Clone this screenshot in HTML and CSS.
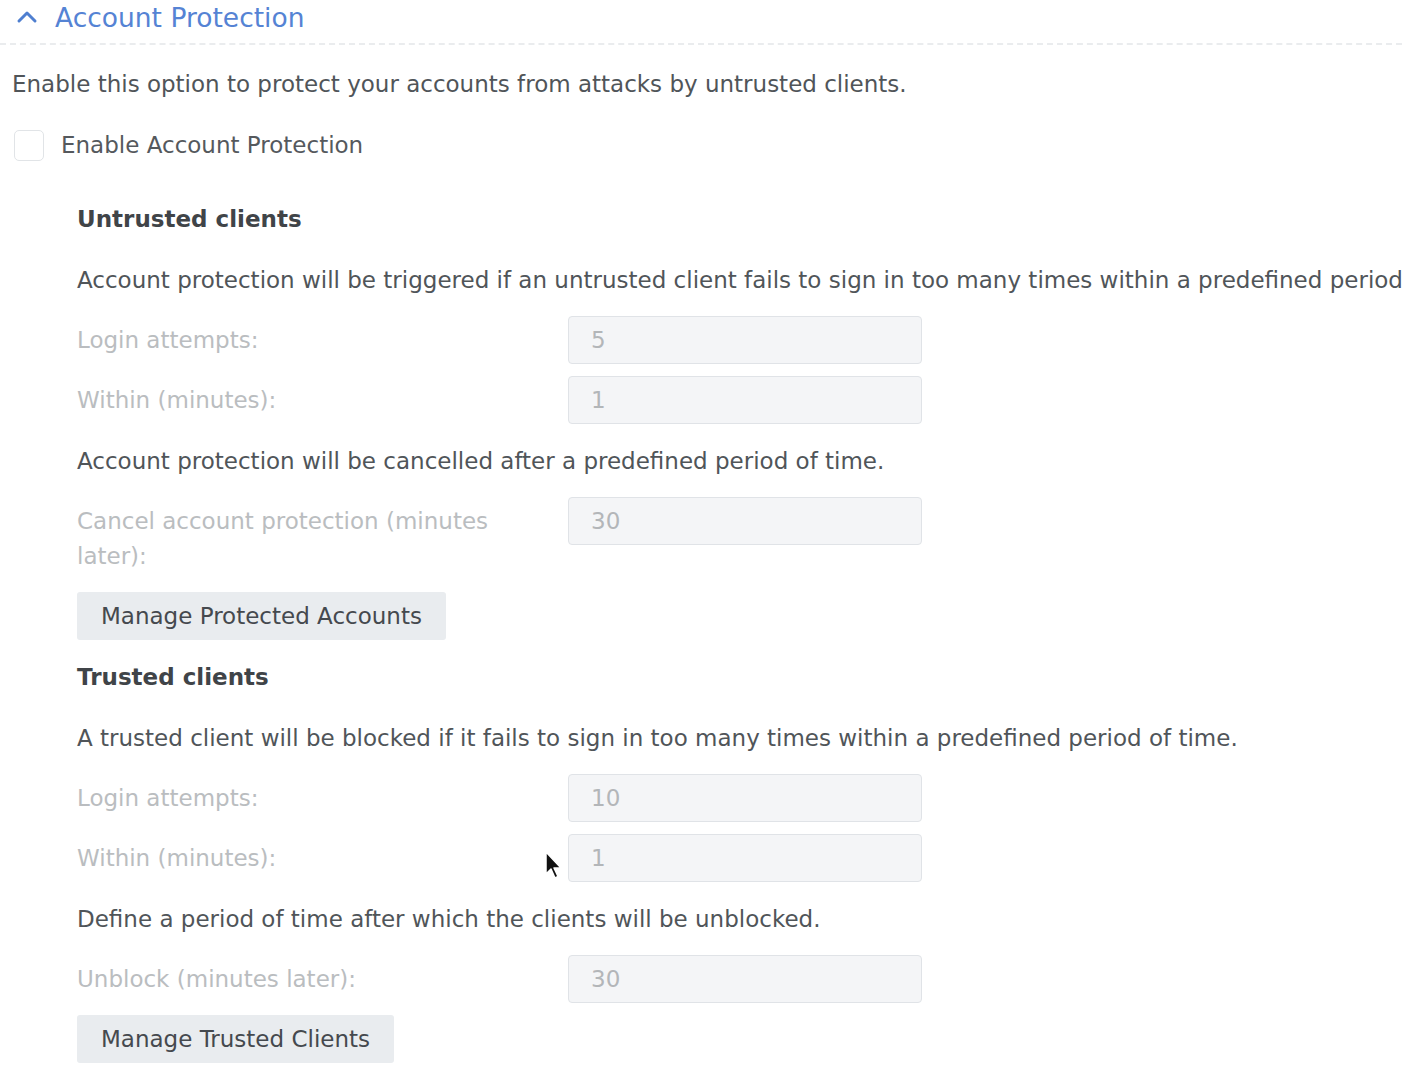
FILE: index.html
```html
<!DOCTYPE html>
<html lang="en">
<head>
<meta charset="utf-8">
<title>Account Protection</title>
<link rel="stylesheet" href="styles.css">
</head>
<body>
<div class="page">
  <div class="section-header">
    <svg class="chevron" width="22" height="14" viewBox="0 0 22 14"><path d="M3 11 L11 3 L19 11" fill="none" stroke="#4f7fd0" stroke-width="3" stroke-linecap="round" stroke-linejoin="round"/></svg>
    <span class="section-title">Account Protection</span>
  </div>
  <p class="desc">Enable this option to protect your accounts from attacks by untrusted clients.</p>
  <label class="check-row"><span class="checkbox"></span><span class="check-label">Enable Account Protection</span></label>

  <div class="indent">
    <h3 class="sub-title">Untrusted clients</h3>
    <p class="line">Account protection will be triggered if an untrusted client fails to sign in too many times within a predefined period of time.</p>
    <div class="field-row"><span class="field-label">Login attempts:</span><span class="input">5</span></div>
    <div class="field-row"><span class="field-label">Within (minutes):</span><span class="input">1</span></div>
    <p class="line">Account protection will be cancelled after a predefined period of time.</p>
    <div class="field-row tall"><span class="field-label wrap">Cancel account protection (minutes later):</span><span class="input">30</span></div>
    <div class="btn-row"><span class="btn">Manage Protected Accounts</span></div>

    <h3 class="sub-title second">Trusted clients</h3>
    <p class="line">A trusted client will be blocked if it fails to sign in too many times within a predefined period of time.</p>
    <div class="field-row"><span class="field-label">Login attempts:</span><span class="input">10</span></div>
    <div class="field-row cursor-row"><span class="field-label">Within (minutes):</span><span class="input">1</span>
      <svg class="cursor" width="18" height="30" viewBox="0 0 18 30"><path d="M2 2 L2 24 L7 19 L11 28 L14 26.5 L10 18 L17 18 Z" fill="#111" stroke="#fff" stroke-width="1.5" stroke-linejoin="round"/></svg>
    </div>
    <p class="line">Define a period of time after which the clients will be unblocked.</p>
    <div class="field-row"><span class="field-label">Unblock (minutes later):</span><span class="input">30</span></div>
    <div class="btn-row"><span class="btn">Manage Trusted Clients</span></div>
  </div>
</div>
</body>
</html>
```
FILE: styles.css
```css
html, body {
  margin: 0;
  padding: 0;
  background: #ffffff;
  overflow: hidden;
}
body {
  font-family: "DejaVu Sans", Verdana, sans-serif;
  font-size: 23px;
  color: #505559;
}
.page {
  width: 1402px;
  height: 1080px;
  overflow: hidden;
}
.section-header {
  height: 34px;
  padding-bottom: 9px;
  display: flex;
  align-items: center;
  border-bottom: 2px dashed #eaecee;
}
.chevron {
  margin-left: 16px;
  margin-right: 17px;
}
.section-title {
  color: #5583d4;
  font-size: 26.5px;
}
.desc {
  margin: 15px 0 0 12px;
  line-height: 48px;
  white-space: nowrap;
}
.check-row {
  margin: 13px 0 0 14px;
  height: 48px;
  display: flex;
  align-items: center;
}
.checkbox {
  width: 28px;
  height: 29px;
  border: 1.5px solid #e1e4e7;
  border-radius: 5px;
  box-sizing: content-box;
  margin-right: 17px;
}
.check-label {
  color: #55595d;
}
.indent {
  margin-left: 77px;
}
.sub-title {
  margin: 26px 0 0 0;
  font-size: 23px;
  font-weight: bold;
  line-height: 48px;
  color: #404448;
}
.sub-title.second {
  margin-top: 13px;
}
.line {
  margin: 13px 0 0 0;
  line-height: 48px;
  white-space: nowrap;
}
.field-row {
  margin-top: 12px;
  display: flex;
  align-items: center;
  height: 48px;
  position: relative;
}
.field-row.tall {
  align-items: flex-start;
  height: 83px;
}
.field-label {
  width: 491px;
  flex: none;
  color: #babdc0;
  line-height: 35px;
}
.field-label.wrap {
  padding-top: 7px;
  width: 470px;
  margin-right: 21px;
}
.input {
  width: 330px;
  height: 46px;
  border: 1px solid #e0e3e7;
  border-radius: 4px;
  background: #f4f5f7;
  color: #b3b6b9;
  padding-left: 22px;
  display: flex;
  align-items: center;
  box-sizing: content-box;
}
.btn-row {
  margin-top: 12px;
  height: 48px;
  display: flex;
}
.btn {
  background: #e9ecef;
  border-radius: 3px;
  color: #45494e;
  height: 48px;
  line-height: 48px;
  padding: 0 24px;
}
.cursor {
  position: absolute;
  left: 467px;
  top: 16px;
}
```
